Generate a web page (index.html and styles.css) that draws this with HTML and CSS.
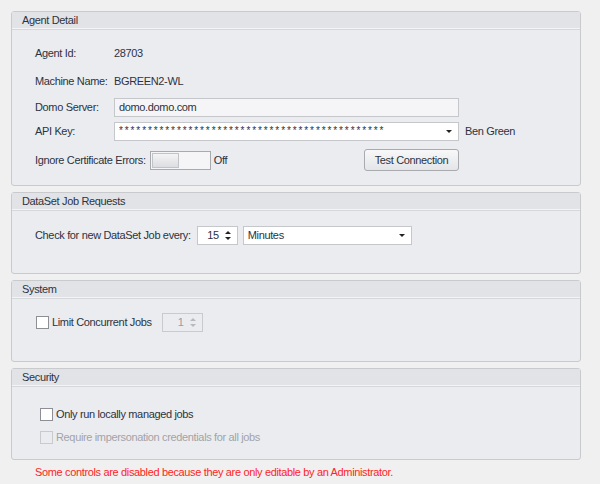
FILE: index.html
```html
<!DOCTYPE html>
<html>
<head>
    <title>Agent Settings</title>
    <link rel="stylesheet" href="styles.css">
</head>
<body>
    <div class="page">
        <div class="panel agent">
            <div class="panel-head">Agent Detail</div>
            <div class="panel-body">
                <div class="row r-id">
                    <span class="label">Agent Id:</span>
                    <span class="value">28703</span>
                </div>
                <div class="row r-machine">
                    <span class="label">Machine Name:</span>
                    <span class="value">BGREEN2-WL</span>
                </div>
                <div class="row r-server">
                    <span class="label">Domo Server:</span>
                    <div class="textbox server">domo.domo.com</div>
                </div>
                <div class="row r-key">
                    <span class="label">API Key:</span>
                    <div class="textbox combo key">
                        <span class="stars">**********************************************</span>
                        <span class="arrow-down"></span>
                    </div>
                    <span class="user">Ben Green</span>
                </div>
                <div class="row r-cert">
                    <span class="label wide">Ignore Certificate Errors:</span>
                    <div class="toggle"><div class="knob"></div></div>
                    <span class="toggle-text">Off</span>
                    <button class="btn">Test Connection</button>
                </div>
            </div>
        </div>

        <div class="panel dataset">
            <div class="panel-head">DataSet Job Requests</div>
            <div class="panel-body">
                <div class="row">
                    <span class="label every">Check for new DataSet Job every:</span>
                    <div class="spin">
                        <span class="spin-val">15</span>
                        <span class="spin-btns"><span class="up"></span><span class="down"></span></span>
                    </div>
                    <div class="textbox combo units">
                        <span>Minutes</span>
                        <span class="arrow-down"></span>
                    </div>
                </div>
            </div>
        </div>

        <div class="panel system">
            <div class="panel-head">System</div>
            <div class="panel-body">
                <div class="row">
                    <span class="check"></span>
                    <span class="check-text">Limit Concurrent Jobs</span>
                    <div class="spin disabled">
                        <span class="spin-val">1</span>
                        <span class="spin-btns"><span class="up"></span><span class="down"></span></span>
                    </div>
                </div>
            </div>
        </div>

        <div class="panel security">
            <div class="panel-head">Security</div>
            <div class="panel-body">
                <div class="row">
                    <span class="check"></span>
                    <span class="check-text">Only run locally managed jobs</span>
                </div>
                <div class="row off">
                    <span class="check"></span>
                    <span class="check-text">Require impersonation credentials for all jobs</span>
                </div>
            </div>
        </div>

        <div class="notice">Some controls are disabled because they are only editable by an Administrator.</div>
    </div>
</body>
</html>
```

FILE: styles.css
```css
body {
    margin: 0;
    background: #f0f0f0;
    font-family: Tahoma, "Liberation Sans", Arial, sans-serif;
    font-size: 11px;
    letter-spacing: -0.35px;
    line-height: 13px;
    color: #2b3340;
    white-space: nowrap;
}
.page {
    width: 570px;
    padding: 11px 0 0 11px;
    display: flex;
    flex-direction: column;
    gap: 6px;
}
.panel {
    background: #ebecf0;
    border: 1px solid #c9cace;
    border-radius: 3px;
    box-sizing: border-box;
}
.panel-head {
    height: 17px;
    line-height: 17px;
    padding-left: 10px;
    background: #e2e3e7;
    border-bottom: 1px solid #d6d7db;
    box-shadow: inset 0 -1px 0 #f4f4f6;
}
.panel-body {
    padding-left: 23px;
}
.agent { height: 175px; }
.dataset { height: 82px; }
.system { height: 82px; }
.security { height: 92px; }

.row {
    display: flex;
    align-items: center;
}
.label {
    width: 79px;
    flex-shrink: 0;
}
.label.wide { width: auto; margin-right: 4px; }
.label.every { width: auto; margin-right: 6px; }

.agent .panel-body { padding-top: 13px; }
.r-id, .r-machine { height: 20px; }
.r-machine { margin-top: 8px; }
.r-server { margin-top: 7px; }
.r-key { margin-top: 5px; }
.r-cert { margin-top: 8px; }

.textbox {
    height: 19px;
    box-sizing: border-box;
    border: 1px solid #c6c7cb;
    background: #ffffff;
    padding: 0 4px;
    line-height: 17px;
}
.server {
    width: 345px;
    background: #f5f5f7;
}
.key {
    width: 345px;
}
.combo {
    display: flex;
    align-items: center;
    justify-content: space-between;
}
.stars {
    font-size: 10px;
    letter-spacing: 1.9px;
    overflow: hidden;
    margin-top: -2px;
}
.arrow-down {
    width: 0;
    height: 0;
    border-left: 3px solid transparent;
    border-right: 3px solid transparent;
    border-top: 3px solid #222;
    margin-right: 2px;
}
.user { margin-left: 6px; }

.toggle {
    width: 61px;
    height: 19px;
    box-sizing: border-box;
    border: 1px solid #a9aaae;
    background: #f5f5f7;
    padding: 1px;
}
.knob {
    width: 27px;
    height: 15px;
    box-sizing: border-box;
    border: 1px solid #c2c3c7;
    background: linear-gradient(#f4f4f6, #dcdde1);
}
.toggle-text { margin-left: 3px; }
.btn {
    margin-left: auto;
    margin-right: 121px;
    width: 95px;
    height: 22px;
    font-family: inherit;
    font-size: 11px;
    letter-spacing: -0.35px;
    color: #2b3340;
    border: 1px solid #a9aaae;
    border-radius: 3px;
    background: linear-gradient(#f8f8f9, #e4e5e8);
    padding: 0;
}

.dataset .panel-body { padding-top: 15px; }
.spin {
    width: 41px;
    height: 19px;
    box-sizing: border-box;
    border: 1px solid #c6c7cb;
    background: #ffffff;
    display: flex;
    align-items: center;
    justify-content: flex-end;
}
.spin-val { margin-right: 6px; }
.spin-btns {
    display: flex;
    flex-direction: column;
    gap: 3px;
    margin-right: 6px;
}
.up, .down {
    width: 0;
    height: 0;
    border-left: 3px solid transparent;
    border-right: 3px solid transparent;
}
.up { border-bottom: 3px solid #222; }
.down { border-top: 3px solid #222; }
.units {
    width: 169px;
    margin-left: 5px;
}

.system .panel-body { padding-top: 14px; }
.check {
    width: 13px;
    height: 13px;
    box-sizing: border-box;
    border: 1px solid #8e8f94;
    background: #ffffff;
    flex-shrink: 0;
}
.check-text { margin-left: 3px; }
.system .check { margin-left: 1px; }
.spin.disabled {
    margin-left: 10px;
    background: #ebecf0;
    border-color: #c9cace;
    color: #9a9ba0;
}
.spin.disabled .up { border-bottom-color: #b8b9bd; }
.spin.disabled .down { border-top-color: #b8b9bd; }

.security .panel-body { padding-top: 21px; padding-left: 28px; }
.security .row { height: 13px; }
.security .row.off { margin-top: 10px; }
.row.off .check { border-color: #c9cace; background: #ebecf0; }
.row.off .check-text { color: #a2a3a8; }

.notice {
    color: #ff2424;
    padding-left: 24px;
}
```
